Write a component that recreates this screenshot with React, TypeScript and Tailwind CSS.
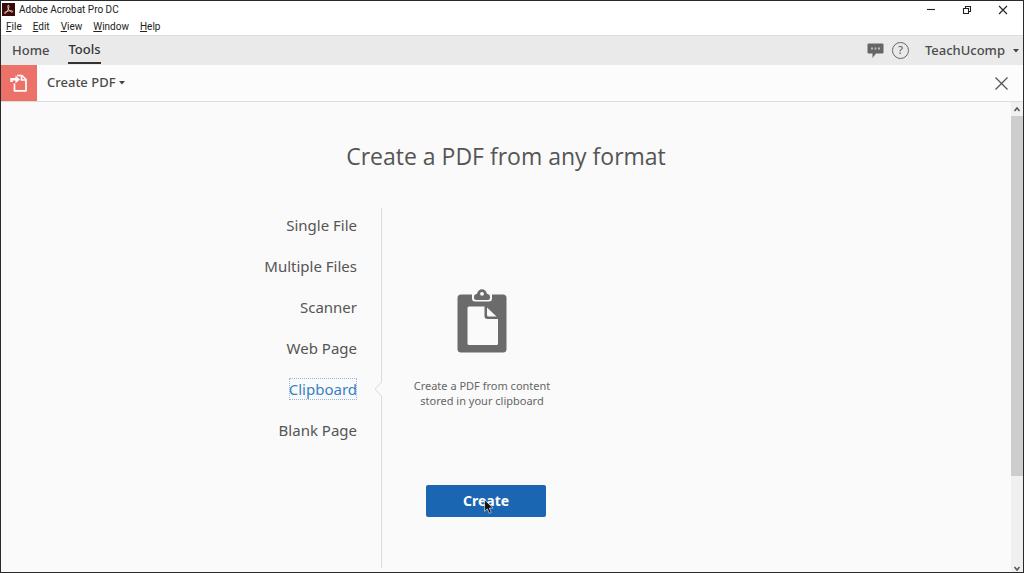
import { ReactNode } from "react";

const menus = ["File", "Edit", "View", "Window", "Help"];

const sources = ["Single File", "Multiple Files", "Scanner", "Web Page", "Clipboard", "Blank Page"];

function AcrobatLogo() {
  return (
    <svg viewBox="0 0 13 13" className="size-[13px]" aria-hidden="true">
      <rect width="13" height="13" fill="#3d0808" />
      <path
        d="M6.3 2.3c1.3 0 .5 3-.6 5.1C4.7 9.5 3 11 2.6 10.2c-.5-1 3-2.500 5.500-2.500 2.200 0 3 .6 2.500 1.200-.8.9-3.600-1.200-4.500-3.600-.5-1.400-.5-3 .2-3z"
        fill="none"
        stroke="#f3d6d3"
        strokeWidth="0.9"
      />
    </svg>
  );
}

function CreatePdfIcon() {
  return (
    <svg viewBox="0 0 18 18" className="size-[18px]" fill="none" stroke="#fff" strokeWidth="1.7" aria-hidden="true">
      <path d="M7 1.500H12l4 4v11.300H4.500V9.500" strokeLinejoin="round" />
      <path d="M11.500 1.500V6h4.500" />
      <path d="M1.500 8V5.200H7" strokeWidth="2.400" />
      <path d="M5.500 1.500l4.500 3.900-4.500 3.900z" fill="#fff" stroke="none" />
    </svg>
  );
}

function ClipboardIcon() {
  return (
    <svg viewBox="0 0 50 64" className="h-16 w-[50px]" aria-hidden="true">
      <rect x="0.500" y="5.500" width="49" height="58" rx="3.500" fill="#6b6b6b" />
      <path d="M15 4v5.500a3 3 0 0 0 3 3h14a3 3 0 0 0 3-3V4z" fill="#fafafa" />
      <path
        d="M19 11a2 2 0 0 1-2-2V7.500c0-1.500 1.200-2.200 3-2.700C20.800 2 22.500.3 25 .3S29.200 2 30 4.800c1.800.5 3 1.200 3 2.700V9a2 2 0 0 1-2 2z"
        fill="#6b6b6b"
      />
      <circle cx="25" cy="4.800" r="1.900" fill="#fafafa" />
      <path d="M12 17.500h15.500V27a3 3 0 0 0 3 3H41v24.500a1.500 1.500 0 0 1-1.500 1.500H12a1.500 1.500 0 0 1-1.500-1.500V19a1.500 1.500 0 0 1 1.500-1.500z" fill="#fafafa" />
      <path d="M30 18.500l9.500 9H31.500a1.500 1.500 0 0 1-1.500-1.500z" fill="#fafafa" />
    </svg>
  );
}

function Cursor() {
  return (
    <svg viewBox="0 0 10 16" className="pointer-events-none absolute top-[14px] left-[58px] h-4 w-[10px]" aria-hidden="true">
      <path d="M.6.800v11.500l2.700-2.500 1.900 4.600 2-.9-1.900-4.400h3.600z" fill="#111" stroke="#fff" strokeWidth="0.6" />
    </svg>
  );
}

function Caret() {
  return (
    <svg viewBox="0 0 6 4" className="h-1 w-[6px]" aria-hidden="true">
      <path d="M0 0h6L3 3.600z" fill="#444" />
    </svg>
  );
}

function WindowButton({ label, children }: { label: string; children: ReactNode }) {
  return (
    <button type="button" aria-label={label} className="flex h-4 w-9 items-center justify-center">
      <svg viewBox="0 0 10 10" className="size-[10px]" fill="none" stroke="#222" strokeWidth="1.100">
        {children}
      </svg>
    </button>
  );
}

export default function App() {
  return (
    <div className="flex min-h-screen flex-col border border-[#2a2a2a] bg-[#fafafa] font-['Noto_Sans','Open_Sans',sans-serif] text-[#555]">
      {/* Title bar */}
      <header className="flex h-[17px] items-center bg-white pr-[2px] pl-[1px]">
        <AcrobatLogo />
        <h1 className="flex-1 pl-1 font-[Roboto,sans-serif] text-[10px] text-[#222]">Adobe Acrobat Pro DC</h1>
        <WindowButton label="Minimize">
          <path d="M1 4.500h8" />
        </WindowButton>
        <WindowButton label="Restore">
          <path d="M1.500 3.500h5v5h-5zM3.500 3.500v-2h5v5h-2" />
        </WindowButton>
        <WindowButton label="Close">
          <path d="M1 1l8 8M9 1L1 9" />
        </WindowButton>
      </header>

      {/* Menu bar */}
      <nav className="flex h-[17px] items-center gap-[11px] bg-white pl-[5px] font-[Roboto,sans-serif] text-[10px] text-[#222]">
        {menus.map((menu) => (
          <button key={menu} type="button">
            <span className="underline">{menu[0]}</span>
            {menu.slice(1)}
          </button>
        ))}
      </nav>

      {/* Tabs */}
      <div className="flex h-[30px] items-center border-t border-[#dedede] bg-[#eaeaea] pr-1 pl-[11px] text-[13px] font-medium text-[#4b4b4b]">
        <button type="button">Home</button>
        <button type="button" className="ml-[19px] h-[28px] self-start border-b-2 border-[#333] pt-[2px] text-[#333]">
          Tools
        </button>
        <div className="ml-auto flex items-center">
          <button type="button" aria-label="Comments">
            <svg viewBox="0 0 17 17" className="size-[17px]">
              <path d="M1.500 1.500h14a1 1 0 0 1 1 1v8a1 1 0 0 1-1 1H9L5.500 16v-4.500h-4a1 1 0 0 1-1-1v-8a1 1 0 0 1 1-1z" fill="#666" />
              <path d="M4 5.500h2v2H4zM7.500 5.500h2v2h-2zM11 5.500h2v2h-2z" fill="#bbb" />
            </svg>
          </button>
          <button type="button" aria-label="Help" className="ml-2 flex size-[17px] items-center justify-center rounded-full border border-[#666] text-[11px] text-[#666]">
            ?
          </button>
          <button type="button" className="ml-4 flex items-center gap-2">
            TeachUcomp
            <Caret />
          </button>
        </div>
      </div>

      {/* Tool bar */}
      <div className="flex h-[37px] items-center border-b border-[#dcdcdc] bg-[#fcfcfc]">
        <div className="flex h-full w-9 items-center justify-center bg-[#ec7169]">
          <CreatePdfIcon />
        </div>
        <button type="button" className="ml-[10px] flex items-center gap-[3px] text-[13px] font-medium text-[#4b4b4b]">
          Create PDF
          <Caret />
        </button>
        <button type="button" aria-label="Close tool" className="mr-[15px] ml-auto">
          <svg viewBox="0 0 13 13" className="size-[13px]" fill="none" stroke="#555" strokeWidth="1.300">
            <path d="M.5.5l12 12M12.500.5l-12 12" />
          </svg>
        </button>
      </div>

      <div className="flex flex-1">
        <main className="flex flex-1 flex-col items-center pt-9 pb-1">
          <h2 className="font-['Open_Sans',sans-serif] text-[23px] leading-9 text-[#555]">Create a PDF from any format</h2>

          <div className="mt-[34px] flex w-full max-w-[630px] flex-1">
            <ul className="flex w-[191px] flex-col items-end gap-[19px] border-r border-[#dcdcdc] pt-[6px] pr-6 text-[15px]">
              {sources.map((source) => {
                const active = source === "Clipboard";
                return (
                  <li key={source} className="relative h-[22px]">
                    <button
                      type="button"
                      className={
                        active
                          ? "h-[22px] leading-[22px] text-[#3583c4] outline-1 -outline-offset-1 outline-[#8fb9de] outline-dotted"
                          : "h-[22px] leading-[22px]"
                      }
                    >
                      {source}
                    </button>
                    {active && (
                      <svg viewBox="0 0 8 14" className="absolute top-1 -right-[25px] h-[14px] w-2" aria-hidden="true">
                        <path d="M8 0v14L1 7z" fill="#fafafa" />
                        <path d="M7.500 0L1 7l6.500 7" fill="none" stroke="#dcdcdc" />
                      </svg>
                    )}
                  </li>
                );
              })}
            </ul>

            <section className="flex w-[208px] flex-col items-center pt-[81px]">
              <div className="flex flex-col items-center pr-2">
                <ClipboardIcon />
                <p className="mt-[25px] text-center text-[11px] leading-[15px] text-[#666]">
                  Create a PDF from content
                  <br />
                  stored in your clipboard
                </p>
              </div>
              <button type="button" className="relative mt-[77px] h-8 w-[120px] rounded-xs bg-[#1b66b3] text-sm font-bold text-white">
                Create
                <Cursor />
              </button>
            </section>
          </div>
        </main>

        {/* Scroll bar */}
        <div className="flex w-3 flex-col items-center bg-[#f0f0f0]">
          <svg viewBox="0 0 12 14" className="h-[14px] w-3" fill="none" stroke="#555" strokeWidth="1.500" aria-hidden="true">
            <path d="M3.500 9L6 6l2.500 3" />
          </svg>
          <div className="h-[360px] w-full bg-[#cdcdcd]" />
          <svg viewBox="0 0 12 8" className="mt-auto h-2 w-3" fill="none" stroke="#555" strokeWidth="1.500" aria-hidden="true">
            <path d="M3.500 3L6 6l2.500-3" />
          </svg>
        </div>
      </div>
    </div>
  );
}
